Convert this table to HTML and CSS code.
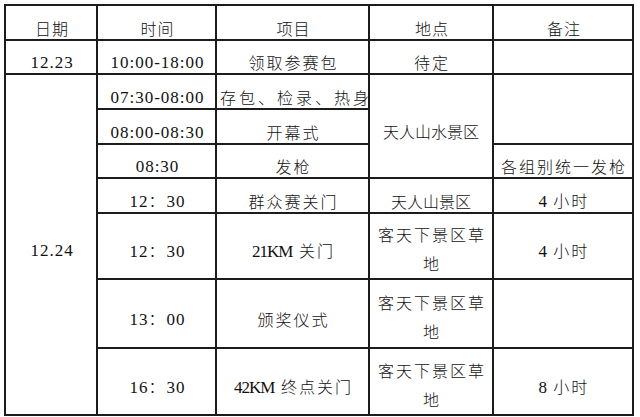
FILE: index.html
```html
<!DOCTYPE html>
<html lang="zh-CN">
<head>
<meta charset="utf-8">
<title>赛程安排</title>
<link rel="stylesheet" href="styles.css">
</head>
<body>
<table class="schedule">
  <colgroup>
    <col class="c-date">
    <col class="c-time">
    <col class="c-item">
    <col class="c-place">
    <col class="c-note">
  </colgroup>
  <tr class="r35 head">
    <td>日期</td>
    <td>时间</td>
    <td>项目</td>
    <td>地点</td>
    <td>备注</td>
  </tr>
  <tr class="r33">
    <td><span class="num">12.23</span></td>
    <td><span class="num">10:00-18:00</span></td>
    <td>领取参赛包</td>
    <td>待定</td>
    <td></td>
  </tr>
  <tr class="r35">
    <td rowspan="8"><span class="num">12.24</span></td>
    <td><span class="num">07:30-08:00</span></td>
    <td class="wide">存包、检录、热身</td>
    <td rowspan="3" class="tight">天人山水景区</td>
    <td rowspan="2"></td>
  </tr>
  <tr class="r35">
    <td><span class="num">08:00-08:30</span></td>
    <td>开幕式</td>
  </tr>
  <tr class="r33">
    <td><span class="num">08:30</span></td>
    <td>发枪</td>
    <td>各组别统一发枪</td>
  </tr>
  <tr class="r35">
    <td><span class="num">12</span>：<span class="num">30</span></td>
    <td>群众赛关门</td>
    <td class="tight">天人山景区</td>
    <td><span class="num">4 </span>小时</td>
  </tr>
  <tr class="r66">
    <td><span class="num">12</span>：<span class="num">30</span></td>
    <td><span class="num km">21KM</span><span class="gap"> </span>关门</td>
    <td class="two">客天下景区草<br>地</td>
    <td><span class="num">4 </span>小时</td>
  </tr>
  <tr class="r69">
    <td><span class="num">13</span>：<span class="num">00</span></td>
    <td>颁奖仪式</td>
    <td class="two">客天下景区草<br>地</td>
    <td></td>
  </tr>
  <tr class="r67">
    <td><span class="num">16</span>：<span class="num">30</span></td>
    <td><span class="num km">42KM</span><span class="gap"> </span>终点关门</td>
    <td class="two">客天下景区草<br>地</td>
    <td><span class="num">8 </span>小时</td>
  </tr>
</table>
</body>
</html>
```

FILE: styles.css
```css
html, body {
  margin: 0;
  padding: 0;
  background: #ffffff;
}

body {
  padding: 4px 0 0 4px;
  font-family: "Noto Sans CJK SC", "Noto Sans", sans-serif;
  color: #111111;
}

.schedule {
  border-collapse: collapse;
  table-layout: fixed;
  width: 628px;
}

.c-date { width: 92px; }
.c-time { width: 119px; }
.c-item { width: 153px; }
.c-place { width: 124px; }
.c-note { width: 140px; }

.schedule td {
  border: 2px solid #1c1c1c;
  text-align: center;
  vertical-align: middle;
  padding: 10px 2px 0 4px;
  font-size: 16px;
  font-weight: 300;
  line-height: 20px;
  letter-spacing: 2px;
  white-space: nowrap;
}

.head td {
  letter-spacing: 1px;
}

.schedule td.wide {
  letter-spacing: 3px;
  padding-left: 3px;
  padding-right: 0;
}

.schedule td.tight {
  letter-spacing: 0;
  padding-left: 2px;
}

.schedule td.two {
  line-height: 29px;
  padding-top: 6px;
  padding-bottom: 0;
  letter-spacing: 2px;
}

.num {
  font-family: "Liberation Serif", "DejaVu Serif", serif;
  font-size: 17px;
  letter-spacing: 1px;
  font-weight: 400;
}

.km {
  letter-spacing: -1px;
}

.gap {
  letter-spacing: 3px;
}

.r33 { height: 33px; }
.r35 { height: 35px; }
.r66 { height: 66px; }
.r67 { height: 67px; }
.r69 { height: 69px; }
```
